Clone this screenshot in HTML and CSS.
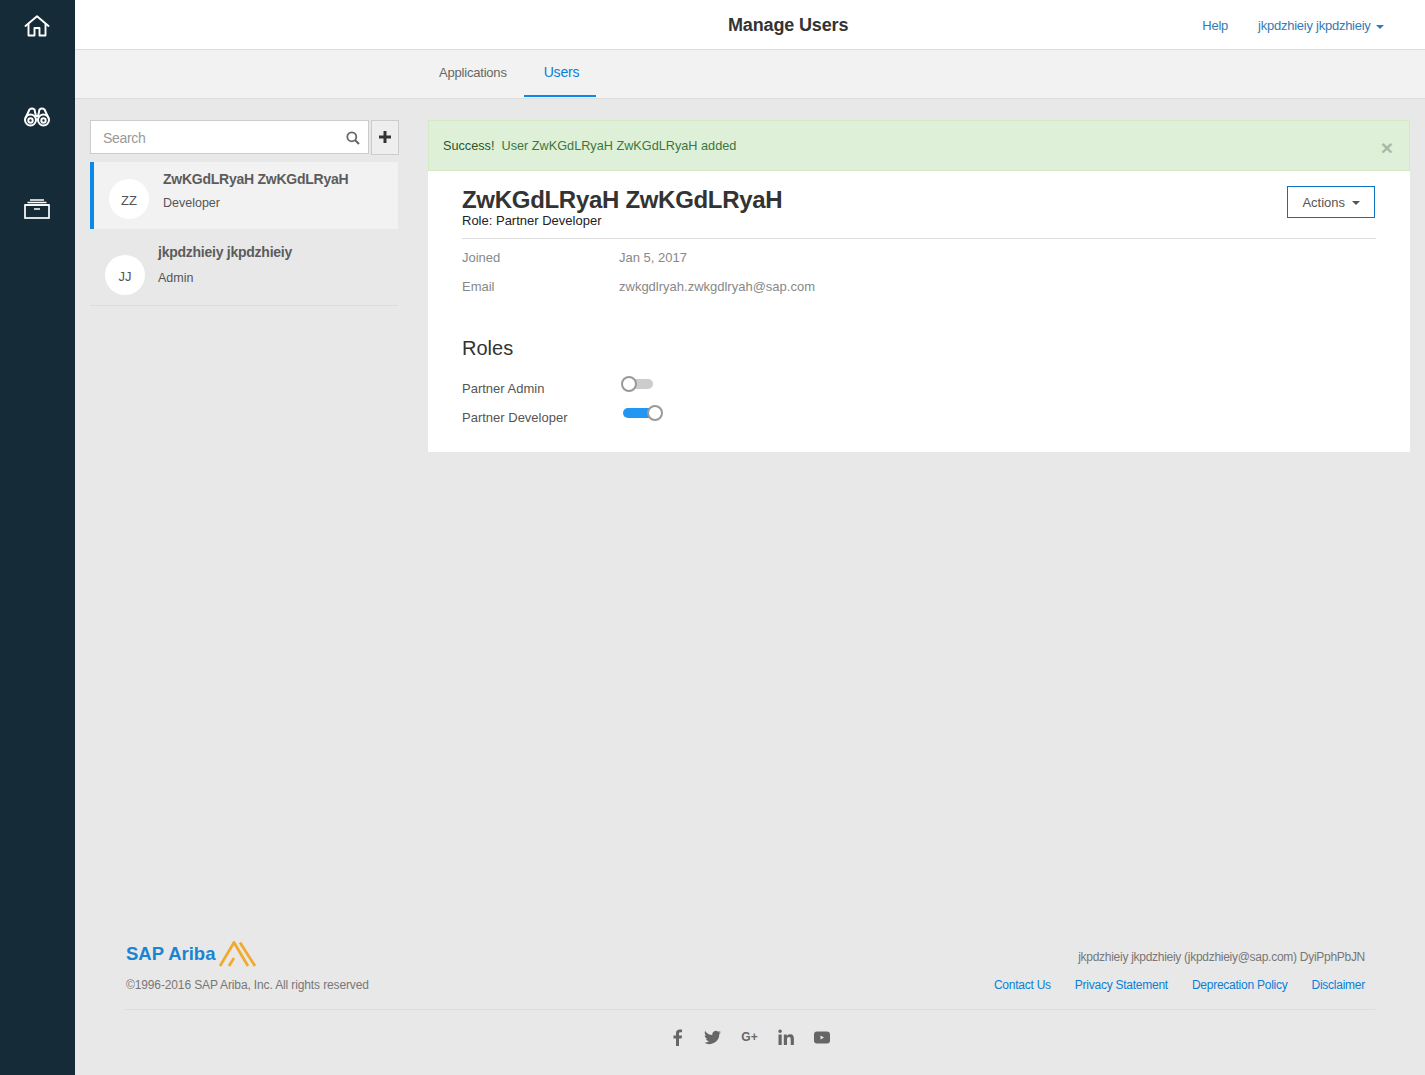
FILE: index.html
```html
<!DOCTYPE html>
<html lang="en">
	<head>
		<meta charset="UTF-8" />
		<meta name="viewport" content="width=device-width, initial-scale=1.0" />
		<title>Manage Users</title>
		<link rel="stylesheet" href="styles.css">
	</head>
	<body>
		<nav class="sidebar">
			<a class="side-link">
				<svg width="26" height="22" viewBox="0 0 26 22" fill="none" stroke="#fff" stroke-width="1.9" stroke-linejoin="round" stroke-linecap="round">
					<path d="M1.5 11 13 1.2 24.5 11" />
					<path d="M4.5 9v11.5h6v-7.5h5v7.5h6V9" />
				</svg>
			</a>
			<a class="side-link">
				<svg width="26" height="20" viewBox="0 0 26 20" fill="none" stroke="#fff" stroke-width="2">
					<circle cx="6.500" cy="13" r="5.500" />
					<circle cx="19.500" cy="13" r="5.500" />
					<circle cx="6.500" cy="13.500" r="2.200" />
					<circle cx="19.500" cy="13.500" r="2.200" />
					<path d="M1.500 11 5.500 2.500q2.500-2 5 0l1.500 7M24.500 11 20.500 2.500q-2.500-2-5 0l-1.500 7M12 9h2" />
				</svg>
			</a>
			<a class="side-link">
				<svg width="26" height="20" viewBox="0 0 26 20" fill="none" stroke="#fff" stroke-width="1.7">
					<rect x="1" y="6" width="24" height="13" />
					<path d="M1 6h24M3.500 3.500h19M6 1h14M10 10h6" />
				</svg>
			</a>
		</nav>

		<div class="page">
			<header class="topbar">
				<h1 class="page-title">Manage Users</h1>
				<div class="top-links">
					<a class="help-link">Help</a>
					<a class="user-link">jkpdzhieiy jkpdzhieiy <span class="caret"></span></a>
				</div>
			</header>

			<div class="tabs">
				<a class="tab">Applications</a>
				<a class="tab tab-active">Users</a>
			</div>

			<main class="content">
				<section class="users">
					<div class="search-row">
						<div class="search-box">
							<span class="search-text">Search</span>
							<svg width="14" height="14" viewBox="0 0 14 14" fill="none" stroke="#666" stroke-width="1.8">
								<circle cx="5.800" cy="5.800" r="4.500" />
								<path d="m9 9 4 4" stroke-width="2.200" />
							</svg>
						</div>
						<button class="add-btn" type="button">
							<svg width="12" height="12" viewBox="0 0 12 12" fill="#333"><path d="M4.500 0h3v4.500H12v3H7.500V12h-3V7.500H0v-3h4.500z" /></svg>
						</button>
					</div>

					<div class="user-row user-row-active">
						<span class="avatar">ZZ</span>
						<div class="user-info">
							<div class="user-name">ZwKGdLRyaH ZwKGdLRyaH</div>
							<div class="user-role">Developer</div>
						</div>
					</div>
					<div class="user-row user-row-plain">
						<span class="avatar">JJ</span>
						<div class="user-info">
							<div class="user-name">jkpdzhieiy jkpdzhieiy</div>
							<div class="user-role">Admin</div>
						</div>
					</div>
				</section>

				<section class="detail">
					<div class="alert">
						<span><span class="alert-strong">Success!</span>&nbsp; User ZwKGdLRyaH ZwKGdLRyaH added</span>
						<span class="alert-close">&times;</span>
					</div>
					<div class="panel">
						<div class="panel-head">
							<div>
								<h2 class="detail-name">ZwKGdLRyaH ZwKGdLRyaH</h2>
								<div class="detail-role">Role: Partner Developer</div>
							</div>
							<button class="actions-btn" type="button">Actions <span class="caret caret-dark"></span></button>
						</div>
						<div class="info-row"><span class="info-label">Joined</span><span>Jan 5, 2017</span></div>
						<div class="info-row"><span class="info-label">Email</span><span>zwkgdlryah.zwkgdlryah@sap.com</span></div>

						<h3 class="roles-title">Roles</h3>
						<div class="role-row">
							<span class="role-label">Partner Admin</span>
							<span class="toggle"><span class="toggle-knob"></span></span>
						</div>
						<div class="role-row">
							<span class="role-label">Partner Developer</span>
							<span class="toggle toggle-on"><span class="toggle-knob"></span></span>
						</div>
					</div>
				</section>
			</main>

			<footer class="footer">
				<div class="footer-top">
					<div>
						<div class="logo">
							<span class="logo-text">SAP Ariba</span>
							<svg width="37" height="26" viewBox="0 0 37 26" fill="none" stroke="#f0ab2e" stroke-width="2.800">
								<path d="M1 25 15 1.500 29 25M21 1.500 36 25M10 25l5-8" />
							</svg>
						</div>
						<div class="copyright">©1996-2016 SAP Ariba, Inc. All rights reserved</div>
					</div>
					<div class="footer-right">
						<div class="footer-user">jkpdzhieiy jkpdzhieiy (jkpdzhieiy@sap.com) DyiPphPbJN</div>
						<div class="footer-links">
							<a>Contact Us</a>
							<a>Privacy Statement</a>
							<a>Deprecation Policy</a>
							<a>Disclaimer</a>
						</div>
					</div>
				</div>
				<div class="social">
					<svg class="social-f" width="10" height="17" viewBox="0 0 10 17" fill="#666"><path d="M3 17V9.500H.500V6.500H3V4.300C3 1.700 4.500.500 6.700.500c1 0 1.900.100 2.300.100v2.700H7.500c-1.200 0-1.500.600-1.500 1.400v1.800h3l-.400 3H6V17z" /></svg>
					<svg width="17" height="15" viewBox="0 0 17 15" fill="#666"><path d="M17 2.300c-.600.300-1.300.500-2 .600.700-.400 1.300-1.100 1.500-1.900-.700.400-1.400.700-2.200.800A3.500 3.500 0 0 0 8.400 5C5.500 4.800 2.900 3.400 1.200.900.300 2.500.700 4.500 2.300 5.600c-.600 0-1.100-.200-1.600-.400 0 1.700 1.200 3.100 2.800 3.500-.500.100-1 .100-1.600 0 .500 1.400 1.700 2.400 3.300 2.400A7 7 0 0 1 0 12.600 10 10 0 0 0 15.300 4c.700-.500 1.300-1 1.700-1.700z" /></svg>
					<span class="gplus">G+</span>
					<svg width="16" height="16" viewBox="0 0 16 16" fill="#666"><path d="M.500 5.500h3.200V16H.500zM2.100.500a1.800 1.800 0 1 1 0 3.600 1.800 1.800 0 0 1 0-3.600zM5.800 5.500h3v1.500c.500-.900 1.600-1.800 3.200-1.800 3.300 0 3.900 2.100 3.900 4.900V16h-3.200v-5.100c0-1.200 0-2.800-1.700-2.800S9 9.400 9 10.800V16H5.800z" /></svg>
					<svg width="16" height="13" viewBox="0 0 16 13" fill="#666"><path fill-rule="evenodd" d="M3 .500h10a3 3 0 0 1 3 3v6a3 3 0 0 1-3 3H3a3 3 0 0 1-3-3v-6a3 3 0 0 1 3-3zM6.500 4.500v4l3.500-2z" /></svg>
				</div>
			</footer>
		</div>
	</body>
</html>
```

FILE: styles.css
```css
* {
	box-sizing: border-box;
}

body {
	display: flex;
	margin: 0;
	min-height: 1075px;
	font-family: "Liberation Sans", Arial, sans-serif;
	font-size: 13px;
	color: #555;
	background-color: #e8e8e8;
}

a {
	color: #0a7fd6;
	text-decoration: none;
}

/* left rail */
.sidebar {
	display: flex;
	flex-direction: column;
	align-items: center;
	flex: 0 0 75px;
	padding: 15px 1px 0 0;
	background-color: #152b38;
}

.side-link {
	display: flex;
	justify-content: center;
	height: 92px;
}

.page {
	display: flex;
	flex-direction: column;
	flex: 1;
	min-width: 0;
}

/* header */
.topbar {
	display: flex;
	align-items: center;
	justify-content: space-between;
	height: 50px;
	padding: 2px 41px 0 653px;
	background-color: #fff;
	border-bottom: 1px solid #ddd;
}

.page-title {
	margin: 0;
	font-size: 18px;
	font-weight: 700;
	color: #333;
	letter-spacing: -0.15px;
}

.top-links {
	display: flex;
	gap: 30px;
	font-size: 13px;
	letter-spacing: -0.25px;
}

.help-link,
.user-link {
	color: #337ab7;
}

.caret {
	display: inline-block;
	width: 0;
	height: 0;
	margin-left: 2px;
	vertical-align: middle;
	border-top: 4px solid #337ab7;
	border-left: 4px solid transparent;
	border-right: 4px solid transparent;
}

.caret-dark {
	margin-left: 3px;
	border-top-color: #555;
}

/* tabs */
.tabs {
	display: flex;
	height: 49px;
	padding: 1px 0 0 347px;
	background-color: #f2f2f2;
	border-bottom: 1px solid #ddd;
	letter-spacing: -0.2px;
}

.tab {
	height: 46px;
	padding: 14px 17px 0;
	font-size: 13px;
	color: #666;
}

.tab-active {
	padding: 13px 17px 0 20px;
	font-size: 14px;
	color: #0a7fd6;
	border-bottom: 2px solid #0a8ae6;
}

/* main columns */
.content {
	display: flex;
	align-items: flex-start;
	gap: 30px;
	padding: 21px 15px 0;
}

.users {
	flex: 0 0 308px;
	min-width: 0;
}

.search-row {
	display: flex;
	gap: 2px;
	width: 309px;
	margin-bottom: 7px;
}

.search-box {
	display: flex;
	align-items: center;
	justify-content: space-between;
	width: 279px;
	height: 34px;
	padding: 1px 8px 0 12px;
	background-color: #fff;
	border: 1px solid #ccc;
}

.search-text {
	font-size: 14px;
	color: #999;
	letter-spacing: -0.3px;
}

.add-btn {
	display: flex;
	align-items: center;
	justify-content: center;
	width: 28px;
	height: 35px;
	padding: 0 0 2px;
	background-color: #eee;
	border: 1px solid #ccc;
}

.user-row {
	display: flex;
	align-items: flex-start;
}

.user-row-active {
	height: 67px;
	padding: 17px 0 0 15px;
	background-color: #f2f2f2;
	border-left: 4px solid #0a8ae6;
}

.user-row-plain {
	height: 77px;
	padding: 26px 0 0 15px;
	border-bottom: 1px solid #ddd;
}

.avatar {
	display: flex;
	align-items: center;
	justify-content: center;
	flex: 0 0 40px;
	height: 40px;
	padding-top: 3px;
	font-size: 13px;
	background-color: #fff;
	border-radius: 50%;
}

.user-info {
	margin: -9px 0 0 14px;
}

.user-row-plain .user-info {
	margin: -12px 0 0 13px;
}

.user-name {
	font-size: 14px;
	font-weight: 700;
	line-height: 18px;
	color: #5c5c5c;
	letter-spacing: -0.25px;
}

.user-role {
	margin-top: 7px;
	font-size: 12.500px;
	line-height: 16px;
	color: #555;
}

.user-row-plain .user-role {
	margin-top: 9px;
}

/* detail panel */
.detail {
	flex: 1;
	min-width: 0;
}

.alert {
	display: flex;
	align-items: center;
	justify-content: space-between;
	height: 51px;
	padding: 0 16px 0 14px;
	font-size: 12.700px;
	color: #3c763d;
	background-color: #dff0d8;
	border: 1px solid #d6e9c6;
}

.alert-strong {
	color: #2b542c;
}

.alert-close {
	margin-top: 5px;
	font-size: 21px;
	font-weight: 700;
	color: #a9b9a4;
}

.panel {
	height: 281px;
	padding: 15px 34px 0;
	background-color: #fff;
}

.panel-head {
	display: flex;
	align-items: flex-start;
	justify-content: space-between;
	height: 53px;
	margin-bottom: 9px;
	border-bottom: 1px solid #ddd;
}

.detail-name {
	margin: 0;
	font-size: 24px;
	font-weight: 700;
	line-height: 28px;
	color: #333;
	letter-spacing: -0.3px;
}

.detail-role {
	margin-top: -1px;
	font-size: 13px;
	line-height: 16px;
	color: #222;
}

.actions-btn {
	width: 88px;
	height: 32px;
	margin-right: 1px;
	font-family: inherit;
	font-size: 13px;
	color: #555;
	background-color: #fff;
	border: 1px solid #0a70c0;
}

.info-row {
	display: flex;
	height: 29px;
	font-size: 13px;
	line-height: 19px;
	color: #888;
}

.info-label {
	flex: 0 0 157px;
}

.roles-title {
	margin: 28px 0 18px;
	font-size: 20px;
	font-weight: 400;
	line-height: 28px;
	color: #333;
}

.role-row {
	display: flex;
	align-items: flex-start;
	height: 29px;
	font-size: 13px;
	line-height: 18px;
	color: #555;
}

.role-label {
	flex: 0 0 157px;
}

.toggle {
	position: relative;
	display: block;
	width: 30px;
	height: 10px;
	margin: -1px 0 0 4px;
	background-color: #ccc;
	border-radius: 5px;
}

.toggle-on {
	width: 34px;
	background-color: #2196f3;
}

.toggle-knob {
	position: absolute;
	top: -3px;
	left: -2px;
	width: 16px;
	height: 16px;
	background-color: #fff;
	border: 2px solid #999;
	border-radius: 50%;
}

.toggle-on .toggle-knob {
	left: auto;
	right: -6px;
}

/* footer */
.footer {
	margin-top: auto;
	padding: 0 50px 0;
}

.footer-top {
	display: flex;
	align-items: flex-end;
	justify-content: space-between;
	padding: 0 10px 16px 1px;
	border-bottom: 1px solid #ddd;
}

.logo {
	display: flex;
	align-items: center;
	gap: 4px;
}

.logo-text {
	font-size: 18.500px;
	font-weight: 700;
	color: #1b84d1;
}

.copyright {
	margin-top: 10px;
	font-size: 12px;
	line-height: 16px;
	color: #777;
	letter-spacing: -0.13px;
}

.footer-right {
	text-align: right;
	font-size: 12px;
	line-height: 16px;
	letter-spacing: -0.25px;
	color: #777;
}

.footer-user {
	letter-spacing: -0.28px;
}

.footer-links {
	display: flex;
	justify-content: flex-end;
	gap: 24px;
	margin-top: 12px;
}

.social {
	display: flex;
	align-items: center;
	justify-content: center;
	gap: 20px;
	height: 65px;
	padding: 0 0 11px 3px;
}

.social-f {
	margin-right: 1px;
}

.gplus {
	font-size: 12px;
	font-weight: 700;
	color: #666;
}
```
